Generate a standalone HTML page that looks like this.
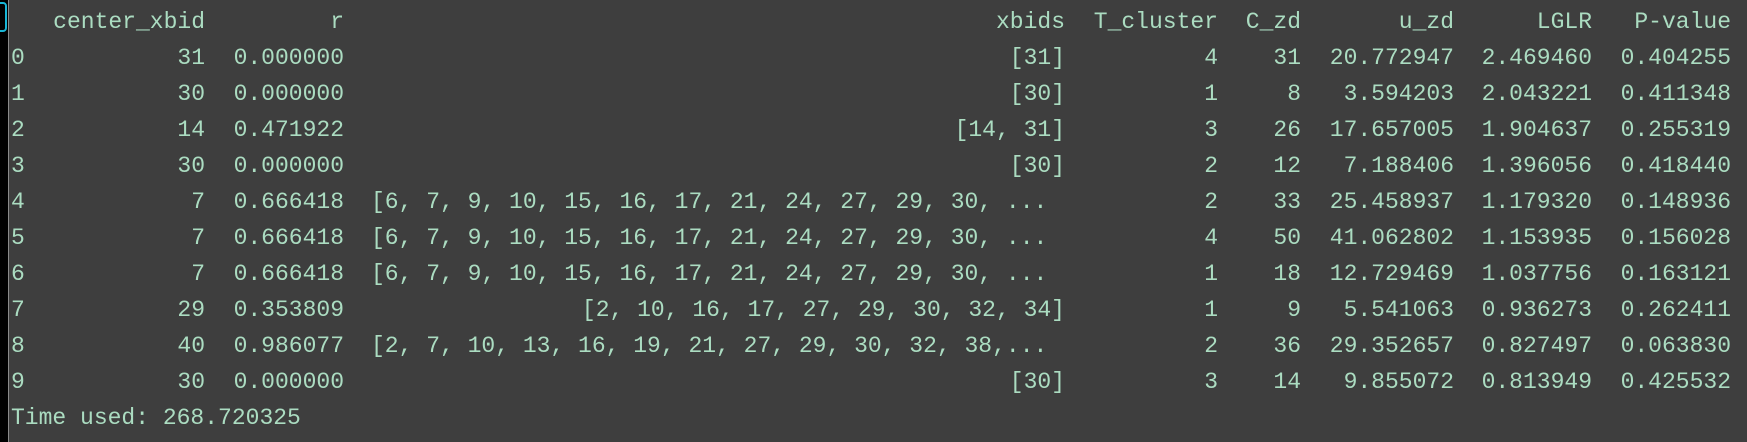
<!DOCTYPE html>
<html><head><meta charset="utf-8"><style>
html,body{margin:0;padding:0}
body{width:1747px;height:442px;background:#3e3e3e;position:relative;overflow:hidden;font-family:"Liberation Mono","DejaVu Sans Mono",monospace;font-size:23px;color:#abdcc1}
.strip{position:absolute;left:0;top:0;width:8px;height:442px;background:#000}
.line{position:absolute;left:8px;top:0;width:1px;height:442px;background:#8a8a8a}
.br{position:absolute;left:-6px;top:2px;width:9px;height:26px;border:2px solid #19b6d6;border-radius:4px}
.row{position:absolute;left:0;width:1747px;height:36px;line-height:36px}
.row span{position:absolute;white-space:pre}
.i{left:11px}
.c1{right:calc(1747px - 205px)}
.c2{right:calc(1747px - 344px)}
.c3{right:calc(1747px - 1065px)}
.c4{right:calc(1747px - 1218px)}
.c5{right:calc(1747px - 1301px)}
.c6{right:calc(1747px - 1454px)}
.c7{right:calc(1747px - 1592px)}
.c8{right:calc(1747px - 1731px)}
.l{left:371px}
</style></head><body>
<div class="strip"><div class="br"></div></div><div class="line"></div>
<div class="row" style="top:4px"><span class="c1">center_xbid</span><span class="c2">r</span><span class="c3">xbids</span><span class="c4">T_cluster</span><span class="c5">C_zd</span><span class="c6">u_zd</span><span class="c7">LGLR</span><span class="c8">P-value</span></div>
<div class="row" style="top:40px"><span class="i">0</span><span class="c1">31</span><span class="c2">0.000000</span><span class="c3">[31]</span><span class="c4">4</span><span class="c5">31</span><span class="c6">20.772947</span><span class="c7">2.469460</span><span class="c8">0.404255</span></div>
<div class="row" style="top:76px"><span class="i">1</span><span class="c1">30</span><span class="c2">0.000000</span><span class="c3">[30]</span><span class="c4">1</span><span class="c5">8</span><span class="c6">3.594203</span><span class="c7">2.043221</span><span class="c8">0.411348</span></div>
<div class="row" style="top:112px"><span class="i">2</span><span class="c1">14</span><span class="c2">0.471922</span><span class="c3">[14, 31]</span><span class="c4">3</span><span class="c5">26</span><span class="c6">17.657005</span><span class="c7">1.904637</span><span class="c8">0.255319</span></div>
<div class="row" style="top:148px"><span class="i">3</span><span class="c1">30</span><span class="c2">0.000000</span><span class="c3">[30]</span><span class="c4">2</span><span class="c5">12</span><span class="c6">7.188406</span><span class="c7">1.396056</span><span class="c8">0.418440</span></div>
<div class="row" style="top:184px"><span class="i">4</span><span class="c1">7</span><span class="c2">0.666418</span><span class="l">[6, 7, 9, 10, 15, 16, 17, 21, 24, 27, 29, 30, ...</span><span class="c4">2</span><span class="c5">33</span><span class="c6">25.458937</span><span class="c7">1.179320</span><span class="c8">0.148936</span></div>
<div class="row" style="top:220px"><span class="i">5</span><span class="c1">7</span><span class="c2">0.666418</span><span class="l">[6, 7, 9, 10, 15, 16, 17, 21, 24, 27, 29, 30, ...</span><span class="c4">4</span><span class="c5">50</span><span class="c6">41.062802</span><span class="c7">1.153935</span><span class="c8">0.156028</span></div>
<div class="row" style="top:256px"><span class="i">6</span><span class="c1">7</span><span class="c2">0.666418</span><span class="l">[6, 7, 9, 10, 15, 16, 17, 21, 24, 27, 29, 30, ...</span><span class="c4">1</span><span class="c5">18</span><span class="c6">12.729469</span><span class="c7">1.037756</span><span class="c8">0.163121</span></div>
<div class="row" style="top:292px"><span class="i">7</span><span class="c1">29</span><span class="c2">0.353809</span><span class="c3">[2, 10, 16, 17, 27, 29, 30, 32, 34]</span><span class="c4">1</span><span class="c5">9</span><span class="c6">5.541063</span><span class="c7">0.936273</span><span class="c8">0.262411</span></div>
<div class="row" style="top:328px"><span class="i">8</span><span class="c1">40</span><span class="c2">0.986077</span><span class="l">[2, 7, 10, 13, 16, 19, 21, 27, 29, 30, 32, 38,...</span><span class="c4">2</span><span class="c5">36</span><span class="c6">29.352657</span><span class="c7">0.827497</span><span class="c8">0.063830</span></div>
<div class="row" style="top:364px"><span class="i">9</span><span class="c1">30</span><span class="c2">0.000000</span><span class="c3">[30]</span><span class="c4">3</span><span class="c5">14</span><span class="c6">9.855072</span><span class="c7">0.813949</span><span class="c8">0.425532</span></div>
<div class="row" style="top:400px"><span class="i">Time used: 268.720325</span></div>
</body></html>
